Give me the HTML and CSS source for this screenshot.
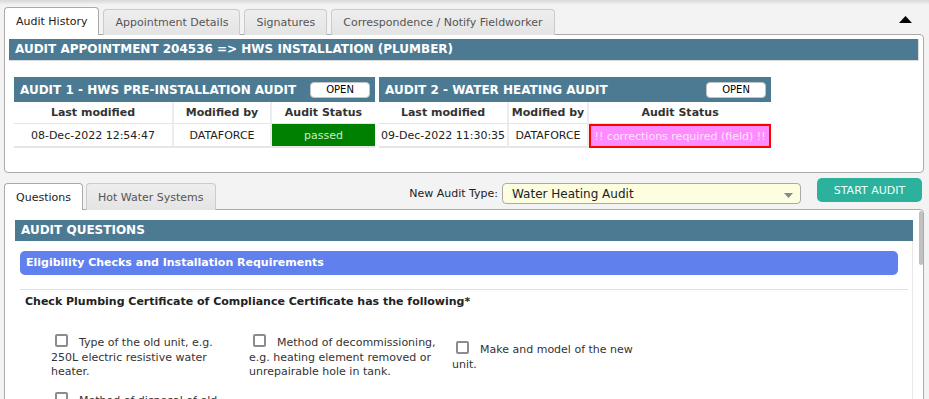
FILE: index.html
```html
<!DOCTYPE html>
<html>
<head>
<meta charset="utf-8">
<title>Audit</title>
<link rel="stylesheet" href="styles.css">
</head>
<body>
<div class="page">
  <div class="tabbar">
    <div class="tab active">Audit History</div>
    <div class="tab">Appointment Details</div>
    <div class="tab">Signatures</div>
    <div class="tab">Correspondence / Notify Fieldworker</div>
    <div class="collapse-toggle"><svg width="13" height="7" viewBox="0 0 13 7"><polygon points="0,7 6.5,0 13,7" fill="#000"/></svg></div>
  </div>
  <div class="panel history">
    <div class="section-bar">AUDIT APPOINTMENT 204536 =&gt; HWS INSTALLATION (PLUMBER)</div>
    <div class="audits">
      <table class="audit audit-1">
        <colgroup><col class="c1"><col class="c2"><col class="c3"></colgroup>
        <tr class="title-row"><th colspan="3"><div class="title-inner"><span>AUDIT 1 - HWS PRE-INSTALLATION AUDIT</span><button class="open-btn">OPEN</button></div></th></tr>
        <tr class="head-row"><th>Last modified</th><th>Modified by</th><th>Audit Status</th></tr>
        <tr class="data-row"><td>08-Dec-2022 12:54:47</td><td>DATAFORCE</td><td class="status passed">passed</td></tr>
      </table>
      <table class="audit audit-2">
        <colgroup><col class="c1"><col class="c2"><col class="c3"></colgroup>
        <tr class="title-row"><th colspan="3"><div class="title-inner"><span>AUDIT 2 - WATER HEATING AUDIT</span><button class="open-btn">OPEN</button></div></th></tr>
        <tr class="head-row"><th>Last modified</th><th>Modified by</th><th>Audit Status</th></tr>
        <tr class="data-row"><td>09-Dec-2022 11:30:35</td><td>DATAFORCE</td><td class="status corrections">!! corrections required (field) !!</td></tr>
      </table>
    </div>
  </div>
  <div class="lower-bar">
    <div class="tabbar lower-tabs">
      <div class="tab active">Questions</div>
      <div class="tab">Hot Water Systems</div>
    </div>
    <div class="new-audit">
      <label class="new-label">New Audit Type:</label>
      <div class="select"><span>Water Heating Audit</span><svg class="caret" width="9" height="5" viewBox="0 0 9 5"><polygon points="0,0 9,0 4.5,5" fill="#888"/></svg></div>
      <button class="start-btn">START AUDIT</button>
    </div>
  </div>
  <div class="panel questions-panel">
    <div class="scroll-content">
      <div class="section-bar q-bar">AUDIT QUESTIONS</div>
      <div class="q-body">
        <div class="group-bar">Eligibility Checks and Installation Requirements</div>
        <div class="divider"></div>
        <div class="question-title">Check Plumbing Certificate of Compliance Certificate has the following*</div>
        <div class="options">
          <div class="option"><span class="cb"></span>Type of the old unit, e.g. 250L electric resistive water heater.</div>
          <div class="option"><span class="cb"></span>Method of decommissioning, e.g. heating element removed or unrepairable hole in tank.</div>
          <div class="option"><span class="cb"></span>Make and model of the new unit.</div>
          <div class="option"><span class="cb"></span>Method of disposal of old unit.</div>
        </div>
      </div>
    </div>
    <div class="scrollbar"><div class="thumb"></div></div>
  </div>
</div>
</body>
</html>
```
FILE: styles.css
```css
* { box-sizing: border-box; }
html, body { margin: 0; height: 100%; overflow: hidden; }
body {
  background: linear-gradient(#d8d8d8 0, #f3f3f3 5px) no-repeat, #f3f3f3;
  font-family: "DejaVu Sans", sans-serif;
  font-size: 11px;
  color: #222;
}
.page { padding: 7px 5px 0 4px; }

.tabbar {
  display: flex;
  align-items: flex-end;
  gap: 4px;
  height: 28px;
  position: relative;
  z-index: 1;
}
.tab {
  height: 26px;
  padding: 0 11px;
  border: 1px solid #cbcbcb;
  border-bottom: none;
  border-radius: 4px 4px 0 0;
  background: linear-gradient(#eeeeee, #e4e4e4);
  color: #555;
  display: flex;
  align-items: center;
  white-space: nowrap;
}
.tab.active {
  height: 28px;
  background: #fff;
  border-color: #aaa;
  color: #222;
}
.collapse-toggle {
  margin-left: auto;
  margin-right: 12px;
  align-self: flex-start;
  margin-top: 9px;
  height: 7px;
  line-height: 0;
}

.panel {
  background: #fff;
  border: 1px solid #aaa;
  margin-top: -1px;
  position: relative;
}
.history {
  height: 139px;
  border-radius: 0 4px 4px 4px;
  padding: 4px 4px 0 4px;
}
.section-bar {
  height: 22px;
  line-height: 21px;
  background: #4d7a93;
  color: #fff;
  font-weight: bold;
  font-size: 12px;
  padding-left: 6px;
  border-right: 1px solid #dcdcdc;
  border-bottom: 1px solid #dcdcdc;
  white-space: nowrap;
}
.audits {
  display: flex;
  align-items: flex-start;
  gap: 4px;
  margin-top: 16px;
  padding-left: 5px;
}
.audit {
  border-collapse: separate;
  border-spacing: 0;
  table-layout: fixed;
  background: #fff;
}
.audit-1 { width: 361px; }
.audit-1 .c1 { width: 160px; }
.audit-1 .c2 { width: 98px; }
.audit-1 .c3 { width: 103px; }
.audit-2 { width: 392px; }
.audit-2 .c1 { width: 130px; }
.audit-2 .c2 { width: 80px; }
.audit-2 .c3 { width: 182px; }

.title-row th {
  height: 25px;
  background: #4d7a93;
  padding: 0 5px 0 6px;
  text-align: left;
}
.title-inner {
  display: flex;
  align-items: center;
  justify-content: space-between;
  color: #fff;
  font-size: 12px;
  font-weight: bold;
  white-space: nowrap;
}
.open-btn {
  width: 60px;
  height: 16px;
  padding: 0;
  background: #fff;
  border: 1px solid #c4c4c4;
  border-radius: 4px;
  font-family: "DejaVu Sans", sans-serif;
  font-size: 10px;
  color: #000;
  line-height: 14px;
  margin-top: 1px;
}
.head-row th {
  height: 22px;
  padding: 0;
  font-weight: bold;
  color: #333;
  text-align: center;
  border-right: 2px solid #ececec;
  border-bottom: 1px solid #e6e6e6;
}
.data-row td {
  height: 24px;
  padding: 0;
  text-align: center;
  color: #222;
  border-right: 2px solid #ececec;
  border-bottom: 2px solid #e6e6e6;
  white-space: nowrap;
}
.head-row th:last-child, .data-row td:last-child { border-right: none; }
.status.passed {
  background: #008000;
  color: #cdeccd;
  border-bottom-color: #e6e6e6;
}
.data-row td.status.corrections {
  background: #ff8cff;
  color: #ffe4ff;
  border: 2px solid #ff0000;
}

.lower-bar {
  display: flex;
  height: 36px;
  margin-top: 1px;
}
.lower-tabs {
  gap: 3px;
  height: 27px;
  align-self: flex-end;
}
.lower-tabs .tab { height: 27px; }
.lower-tabs .tab.active { height: 27px; }
.new-audit {
  margin-left: auto;
  margin-right: 2px;
  margin-top: 5px;
  display: flex;
  align-items: flex-start;
}
.new-label {
  margin-top: 8px;
  margin-right: 4px;
  line-height: 13px;
  color: #222;
}
.select {
  margin-top: 4px;
  width: 299px;
  height: 21px;
  background: #fdfde0;
  border: 1px solid #aaa;
  border-radius: 4px;
  padding: 0 7px 0 9px;
  display: flex;
  align-items: center;
  justify-content: space-between;
  font-size: 12px;
  color: #222;
  margin-right: 16px;
}
.caret { margin-top: 3px; }
.start-btn {
  width: 105px;
  height: 24px;
  margin-top: -1px;
  background: #2bb19c;
  border: none;
  border-radius: 5px;
  color: #f0fffc;
  font-family: "DejaVu Sans", sans-serif;
  font-size: 11px;
  padding: 0;
}

.questions-panel {
  height: 200px;
  border-radius: 0 4px 4px 4px;
  display: flex;
}
.scroll-content {
  flex: 1;
  padding: 10px 0 0 10px;
}
.q-bar {
  height: 21px;
  line-height: 21px;
  border: none;
}
.q-body {
  border-right: 1px solid #e8e8e8;
  height: 200px;
  padding-top: 10px;
}
.group-bar {
  margin: 0 14px 0 5px;
  height: 24px;
  line-height: 24px;
  border-radius: 5px;
  background: #6080ee;
  color: #fff;
  font-weight: bold;
  padding-left: 6px;
}
.divider {
  margin: 14px 4px 0 5px;
  height: 1px;
  background: #e2e2e2;
}
.question-title {
  margin-top: 5px;
  padding-left: 10px;
  line-height: 13px;
  font-weight: bold;
  color: #222;
}
.options {
  margin-top: 28px;
  padding-left: 36px;
  display: grid;
  grid-template-columns: 186px 191px 194px;
  column-gap: 12px;
  row-gap: 14px;
  align-items: center;
}
.option {
  line-height: 14.5px;
  color: #333;
}
.cb {
  display: inline-block;
  width: 13px;
  height: 13px;
  border: 2px solid #8b8b93;
  border-radius: 2px;
  margin: -2px 11px 0 4px;
  vertical-align: -1px;
}
.scrollbar {
  width: 10px;
  padding: 1px 0 0 6px;
}
.thumb {
  width: 4px;
  height: 54px;
  background: #c1c1c1;
  border-radius: 2px;
}
```
